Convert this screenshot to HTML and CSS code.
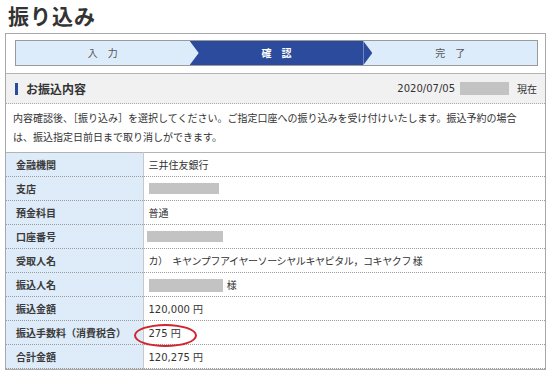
FILE: index.html
```html
<!DOCTYPE html>
<html lang="ja">
<head>
    <meta charset="UTF-8">
    <meta name="viewport" content="width=device-width, initial-scale=1.0">
    <title>振り込み</title>
    <link rel="stylesheet" href="styles.css">
</head>
<body>
    <div class="page">
        <h1 class="page-title">振り込み</h1>

        <div class="panel">
            <div class="steps-wrap">
                <ol class="steps">
                    <li class="step">入　力</li>
                    <li class="step current">確　認</li>
                    <li class="step">完　了</li>
                </ol>
            </div>

            <div class="section-head">
                <h2 class="section-title">お振込内容</h2>
                <div class="as-of">2020/07/05 <span class="mask mask-time"></span> 現在</div>
            </div>

            <p class="notice">内容確認後、［振り込み］を選択してください。ご指定口座への振り込みを受け付けいたします。振込予約の場合は、振込指定日前日まで取り消しができます。</p>

            <table class="detail">
                <colgroup>
                    <col class="col-label">
                    <col>
                </colgroup>
                <tr>
                    <th>金融機関</th>
                    <td>三井住友銀行</td>
                </tr>
                <tr>
                    <th>支店</th>
                    <td><span class="mask mask-branch"></span></td>
                </tr>
                <tr>
                    <th>預金科目</th>
                    <td>普通</td>
                </tr>
                <tr>
                    <th>口座番号</th>
                    <td><span class="mask mask-account"></span></td>
                </tr>
                <tr>
                    <th>受取人名</th>
                    <td class="kana">カ）　キヤンプフアイヤーソーシヤルキヤピタル，コキヤクフ 様</td>
                </tr>
                <tr>
                    <th>振込人名</th>
                    <td><span class="mask mask-sender"></span> 様</td>
                </tr>
                <tr>
                    <th>振込金額</th>
                    <td>120,000 円</td>
                </tr>
                <tr>
                    <th>振込手数料（消費税含）</th>
                    <td><span class="fee">275 円</span></td>
                </tr>
                <tr>
                    <th>合計金額</th>
                    <td>120,275 円</td>
                </tr>
            </table>
        </div>
    </div>
</body>
</html>
```

FILE: styles.css
```css
body {
    margin: 0;
    background: #fff;
    color: #333;
    font-family: "DejaVu Sans", "Noto Sans CJK JP", sans-serif;
    font-size: 10px;
}

.page {
    padding: 0 4px 0 5px;
}

.page-title {
    margin: 0 0 3px 3px;
    font-family: "Noto Sans CJK JP", sans-serif;
    font-size: 21px;
    line-height: 30px;
    letter-spacing: 1px;
    font-weight: bold;
    color: #333;
}

.panel {
    border: 1px solid #a8a8a8;
}

/* progress steps */
.steps-wrap {
    padding: 6px 7px 7px 9px;
    border-bottom: 1px solid #b4b4b4;
}

.steps {
    display: flex;
    margin: 0;
    padding: 0;
    list-style: none;
    border: 1px solid #9a9a9a;
}

.step {
    position: relative;
    flex: 1;
    height: 24px;
    line-height: 24px;
    text-align: center;
    background: #ddecfb;
    color: #555;
    font-family: "Noto Sans CJK JP", sans-serif;
}

.step:nth-child(1) { z-index: 3; }
.step:nth-child(2) { z-index: 2; }
.step:nth-child(3) { z-index: 1; }

.step::after {
    content: "";
    position: absolute;
    top: 0;
    right: -9px;
    width: 9px;
    height: 100%;
    background: inherit;
    clip-path: polygon(0 0, 100% 50%, 0 100%);
}

.step:last-child::after {
    display: none;
}

.step.current {
    background: #2d4b9c;
    color: #fff;
    font-weight: bold;
}

/* section header */
.section-head {
    display: flex;
    align-items: center;
    justify-content: space-between;
    height: 29px;
    padding: 0 8px 0 9px;
    background: #f1f1f1;
    border-bottom: 1px dotted #aaa;
}

.section-title {
    margin: 0;
    padding-left: 8px;
    border-left: 3px solid #2d4b9c;
    font-family: "Noto Sans CJK JP", sans-serif;
    font-size: 12px;
    line-height: 12px;
    font-weight: bold;
    color: #333;
}

.as-of {
    display: flex;
    align-items: center;
    gap: 5px;
}

.as-of .mask {
    margin-right: 3px;
}

.mask {
    display: inline-block;
    vertical-align: middle;
    background: #c3c3c3;
}

.mask-time { width: 49px; height: 13px; }
.mask-branch { width: 70px; height: 11px; }
.mask-account { width: 76px; height: 11px; margin-left: -2px; }
.mask-sender { width: 74px; height: 13px; margin-right: 1px; }

.notice {
    margin: 0;
    padding: 4px 16px 6px 7px;
    line-height: 19px;
    font-family: "Noto Sans CJK JP", sans-serif;
}

/* detail table */
.detail {
    width: 100%;
    border-collapse: collapse;
    table-layout: fixed;
    border-top: 1px solid #b4b4b4;
}

.col-label {
    width: 137px;
}

.detail th,
.detail td {
    height: 23px;
    padding: 0 5px;
    border-bottom: 1px dotted #9c9c9c;
    text-align: left;
    white-space: nowrap;
}

.detail th {
    padding-left: 10px;
    background: #deebf9;
    border-right: 1px solid #c8c8c8;
    font-family: "Noto Sans CJK JP", sans-serif;
    font-weight: bold;
    color: #3a3a3a;
}

.detail td.kana {
    font-family: "Noto Sans CJK JP", sans-serif;
    letter-spacing: -0.4px;
}

.fee {
    position: relative;
}

.fee::after {
    content: "";
    position: absolute;
    left: -15px;
    top: -4px;
    width: 59px;
    height: 19px;
    border: 2px solid #d2232f;
    border-radius: 50%;
}
```
